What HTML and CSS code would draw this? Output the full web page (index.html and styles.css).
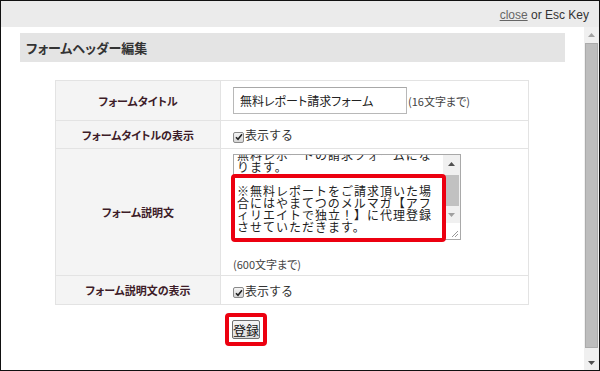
FILE: index.html
```html
<!DOCTYPE html>
<html lang="ja">
<head>
<meta charset="utf-8">
<link rel="stylesheet" href="styles.css">
</head>
<body>
<div class="window">
  <div class="topbar"><span class="close">close</span> or Esc Key</div>
  <div class="main">
    <div class="content">
      <h2 class="section-head">フォームヘッダー編集</h2>
      <table class="form">
        <tr class="r1">
          <th>フォームタイトル</th>
          <td><span class="input">無料レポート請求フォーム</span><span class="note">(16文字まで)</span></td>
        </tr>
        <tr class="r2">
          <th>フォームタイトルの表示</th>
          <td><span class="check"><svg width="8" height="8" viewBox="0 0 8 8"><path d="M1 4.2 L3 6.3 L7 1.2" fill="none" stroke="#222" stroke-width="1.6"/></svg></span><span class="lbl">表示する</span></td>
        </tr>
        <tr class="r3">
          <th>フォーム説明文</th>
          <td class="top">
            <div class="ta-wrap">
              <div class="textarea">
                <div class="ta-view">
                  <div class="ta-text">無料レポートの請求フォームにな<br>ります。<br>&nbsp;<br>※無料レポートをご請求頂いた場<br>合にはやまてつのメルマガ【アフ<br>ィリエイトで独立！】に代理登録<br>させていただきます。</div>
                </div>
                <div class="ta-scroll">
                  <span class="ta-arrow"><svg width="7" height="4" viewBox="0 0 7 4"><path d="M0 4 L3.5 0 L7 4Z" fill="#505050"/></svg></span>
                  <span class="ta-track"><span class="ta-thumb"></span></span>
                  <span class="ta-arrow"><svg width="7" height="4" viewBox="0 0 7 4"><path d="M0 0 L3.5 4 L7 0Z" fill="#a0a0a0"/></svg></span>
                  <span class="ta-corner"><svg width="9" height="9" viewBox="0 0 9 9"><path d="M8 2 L2 8 M8 5 L5 8" stroke="#999" stroke-width="1"/></svg></span>
                </div>
              </div>
              <div class="mark mark-ta"></div>
            </div>
            <div class="note limit">(600文字まで)</div>
          </td>
        </tr>
        <tr class="r4">
          <th>フォーム説明文の表示</th>
          <td><span class="check"><svg width="8" height="8" viewBox="0 0 8 8"><path d="M1 4.2 L3 6.3 L7 1.2" fill="none" stroke="#222" stroke-width="1.6"/></svg></span><span class="lbl">表示する</span></td>
        </tr>
      </table>
      <div class="actions"><span class="mark-btn"><button class="btn" type="button">登録</button></span></div>
    </div>
    <div class="scrollbar">
      <span class="sb-arrow"><svg width="7" height="4" viewBox="0 0 7 4"><path d="M0 4 L3.5 0 L7 4Z" fill="#a3a3a3"/></svg></span>
      <span class="sb-track"><span class="sb-thumb"></span></span>
      <span class="sb-arrow"><svg width="7" height="4" viewBox="0 0 7 4"><path d="M0 0 L3.5 4 L7 0Z" fill="#505050"/></svg></span>
    </div>
  </div>
</div>
</body>
</html>
```

FILE: styles.css
```css
* { box-sizing: border-box; }
html, body { margin: 0; padding: 0; background: #fff; }
body { font-family: "Noto Sans CJK JP", "Liberation Sans", sans-serif; }

.window {
  width: 600px; height: 371px;
  border: 1px solid #111;
  display: flex; flex-direction: column;
  overflow: hidden;
  background: #fff;
}
.topbar {
  flex: none; height: 26px;
  background: #ebebeb;
  text-align: right;
  font: 12px/28px "Liberation Sans", Arial, sans-serif;
  color: #333;
  padding-right: 10px;
}
.close { color: #666; text-decoration: underline; }

.main { flex: 1; display: flex; min-height: 0; }
.content { flex: 1; padding: 6px 19px 0 19px; }

.section-head {
  margin: 0; height: 29px;
  background: #e4e4e4;
  font-size: 13px; font-weight: bold;
  line-height: 29px;
  padding-left: 6px;
  color: #333;
  font-feature-settings: "palt";
}

.form { border-collapse: collapse; width: 474px; margin: 18px 0 0 35px; }
.form th, .form td { border: 1px solid #e3e3e3; padding: 0; }
.form th {
  width: 165px;
  background: #f4f4f4;
  color: #3d1c28;
  font-size: 11px; font-weight: bold;
  text-align: center;
  font-feature-settings: "palt";
}
.form td { padding-left: 12px; font-size: 12px; color: #333; }
.r1 th { height: 40px; }
.r2 th { height: 28px; }
.r4 th { height: 29px; }
.form td.top { vertical-align: top; padding-top: 5px; padding-bottom: 5px; }

.input {
  display: inline-block; vertical-align: middle;
  width: 174px; height: 27px;
  border: 1px solid #b8b8b8;
  border-top-color: #a8a8a8;
  padding-left: 6px;
  font-size: 12px; line-height: 25px;
  color: #222;
  font-feature-settings: "palt";
}
.note { font-size: 11px; color: #444; vertical-align: middle; margin-left: 1px; font-feature-settings: "palt"; }

.check {
  display: inline-flex; align-items: center; justify-content: center;
  width: 11px; height: 11px;
  border: 1px solid #8a8a8a;
  border-radius: 2px;
  background: linear-gradient(#f4f4f4, #d6d6d6);
  vertical-align: -1px;
}
.lbl { font-size: 12px; color: #333; margin-left: 1px; }

.ta-wrap { position: relative; width: 228px; }
.textarea {
  width: 228px; height: 86px;
  border: 1px solid #a9a9a9;
  display: flex;
  background: #fff;
}
.ta-view { flex: 1; overflow: hidden; padding-left: 3px; }
.ta-text {
  margin-top: -6px;
  font-size: 12px; line-height: 12px;
  letter-spacing: 1px;
  white-space: nowrap;
  color: #222;
}
.ta-scroll { flex: none; width: 17px; display: flex; flex-direction: column; background: #f0f0f0; }
.ta-arrow { height: 17px; display: flex; align-items: center; justify-content: center; }
.ta-track { flex: 1; padding: 3px 1px 0 1px; }
.ta-thumb { display: block; height: 31px; background: #c1c1c1; }
.ta-corner { height: 16px; background: #fff; display: flex; align-items: flex-end; justify-content: flex-end; padding: 0 1px 1px 0; }

.mark { position: absolute; border: 4px solid #ec0010; border-radius: 4px; }
.mark-ta { left: -2px; top: 20px; width: 215px; height: 68px; }

.limit { display: block; margin-top: 18px; line-height: 12px; margin-left: 0; }

.actions { margin-top: 8px; padding-left: 205px; }
.mark-btn {
  display: inline-block;
  border: 4px solid #ec0010; border-radius: 4px;
  padding: 3px;
  line-height: 0;
}
.btn {
  width: 28px; height: 19px;
  padding: 0; margin: 0;
  border: 1px solid #6f6f6f;
  border-radius: 2px;
  background: linear-gradient(#f6f6f6, #dcdcdc);
  font-family: "Noto Sans CJK JP", sans-serif;
  font-size: 13px; line-height: 16px;
  color: #111;
}

.scrollbar {
  flex: none; width: 15px;
  background: #f0f0f0;
  display: flex; flex-direction: column;
}
.sb-arrow { height: 15px; display: flex; align-items: center; justify-content: center; }
.sb-track { flex: 1; padding: 1px 1px 7px 1px; display: flex; }
.sb-thumb { flex: 1; background: #bdbdbd; border: 1px solid #ababab; }
```
